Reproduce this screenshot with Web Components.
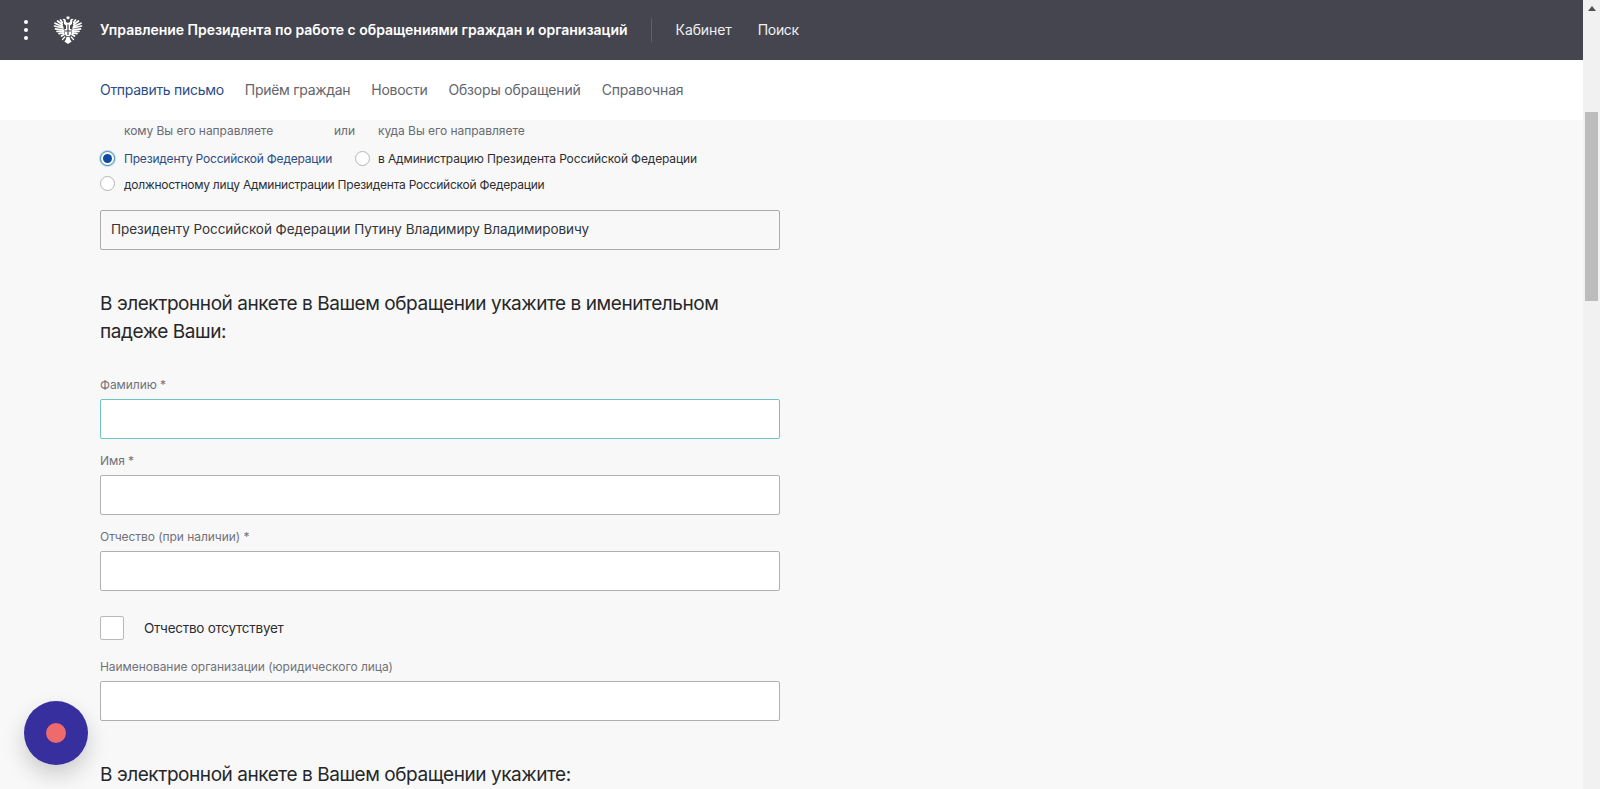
<!DOCTYPE html>
<html lang="ru"><head><meta charset="utf-8"><title>Обращения</title>
<style>
html,body{margin:0;height:100%;overflow:hidden;background:#f8f8f8;font-family:Roboto,"Liberation Sans",sans-serif}
</style></head><body>
<app-shell>
  <top-bar title-text="Управление Президента по работе с обращениями граждан и организаций"></top-bar>
  <sub-nav></sub-nav>
  <letter-form></letter-form>
</app-shell>
<record-fab></record-fab>
<script>
function def(name,css,html){
  customElements.define(name,class extends HTMLElement{
    connectedCallback(){
      if(this.shadowRoot)return;
      const r=this.attachShadow({mode:'open'});
      r.innerHTML='<style>'+css+'</style>'+(typeof html==='function'?html(this):html);
    }
  });
}
const FONT='font-family:Inter,Roboto,sans-serif;';
def('app-shell',`:host{display:grid;grid-template-columns:1fr 17px;height:789px;overflow:hidden}
.main{display:flex;flex-direction:column;min-width:0;height:789px;overflow:hidden}`,
`<div class="main"><slot></slot></div><fake-scrollbar></fake-scrollbar>`);
def('fake-scrollbar',`:host{display:flex;flex-direction:column;align-items:center;background:#f1f1f1;height:789px}
.btn{height:17px;width:17px;display:flex;align-items:center;justify-content:center}
.thumb{width:13px;height:189px;margin-top:95px;background:#bcbcbc}`,
`<div class="btn"><svg width="8" height="5" viewBox="0 0 8 5"><path d="M4 0 8 5H0z" fill="#505050"/></svg></div><div class="thumb"></div>`);
def('eagle-logo',`:host{display:block;width:30px;height:30px}svg{display:block}`,
`<svg width="30" height="30" viewBox="0 0 30 30">
<g fill="#fff">
<path d="M13.700 1.500h2.600l.4 1.800-1.700 1.200-1.700-1.200z"/>
<path d="M9.300 4.600c.8-1.300 2.700-1.300 3.300.1l.4 2.300 2 1 2-1 .4-2.300c.6-1.400 2.500-1.400 3.300-.1l-1.300.4-.4 4-2 1.500v3.500h-4v-3.500l-2-1.500-.4-4z"/>
<path d="M11.500 14h7l-.3 5-1.600 2.300h-3.200l-1.600-2.300z"/>
<path d="M13.500 22h3l.8 2.800 1.300 1.700-3.600 2.500-3.600-2.500 1.300-1.700z"/>
</g>
<path d="M14.400 9.500h1.200v10.500h-1.200z" fill="#44454f"/>
<path d="M12 15.500h6v1h-6z" fill="#44454f"/>
<g stroke="#fff" stroke-width="1.700" stroke-linecap="round" fill="none">
<path d="M9.300 7.500 7.500 5M9.200 9.500 4.500 6M9.500 11.500 2 8.200M10 13 1.500 11M10.300 15 2.500 13.800M10.500 16.500 4 16.300M10.700 18 6 18.700M11 19.500 8.500 21"/>
<path d="M20.700 7.500 22.500 5M20.800 9.500 25.500 6M20.500 11.500 28 8.200M20 13 28.500 11M19.700 15 27.500 13.800M19.500 16.500 26 16.300M19.300 18 24 18.700M19 19.500 21.500 21"/>
<path d="M11.800 22 9.500 24.500M18.200 22l2.300 2.500" stroke-width="1.300"/>
</g>
</svg>`);
def('top-bar',`:host{display:flex;align-items:center;flex:none;height:60px;background:#44454f;color:#fff;${FONT}font-size:14px}
.dots{width:6px;margin-left:23px;display:flex;flex-direction:column;gap:4px}
.dots i{width:4px;height:4px;margin:0 1px;border-radius:50%;background:#fff}
eagle-logo{margin-left:24px}
.t{margin-left:17px;padding-bottom:1px;font-weight:600;letter-spacing:-.02px;white-space:nowrap}
.sep{width:1px;height:24px;background:#5e5f69;margin:0 24px 0 23px}
a{color:#f0f0f0;margin-right:26px;padding-bottom:1px;letter-spacing:-.1px}
a:last-child{letter-spacing:-.3px}`,
h=>`<div class="dots"><i></i><i></i><i></i></div><eagle-logo></eagle-logo><span class="t">${h.getAttribute('title-text')}</span><span class="sep"></span><a>Кабинет</a><a>Поиск</a>`);
def('sub-nav',`:host{display:flex;align-items:center;flex:none;box-sizing:border-box;height:60px;padding:0 0 2px 100px;background:#fff;gap:21px;${FONT}font-size:14px;letter-spacing:-.29px;color:#63646c}
.on{color:#2b4c86}.w{letter-spacing:-.17px}`,
`<span class="on">Отправить письмо</span><span>Приём граждан</span><span>Новости</span><span class="w">Обзоры обращений</span><span class="w">Справочная</span>`);
def('radio-option',`:host{display:inline-flex;align-items:center;${FONT}font-size:12px;letter-spacing:var(--ls,-.2px);color:#2d2e33;white-space:nowrap;gap:var(--g,9px)}
.r{width:13px;height:13px;border:1px solid #b5b5b5;border-radius:50%;background:#fff;flex:none}
.l{padding-top:var(--t,0)}
:host([on]){color:#2b4c86}
:host([on]) .r{border-color:#3d8fb5;box-shadow:0 0 0 1px #b9dbe8}
:host([on]) .r::after{content:"";display:block;width:9px;height:9px;margin:2px;border-radius:50%;background:#0f4aa5}`,
`<span class="r"></span><span class="l"><slot></slot></span>`);
def('text-field',`:host{display:block;width:680px;${FONT}}
label{display:block;font-size:12px;line-height:16px;color:#71727a;letter-spacing:-.05px;margin-bottom:6px}
.i{box-sizing:border-box;height:40px;border:1px solid #b0b0b0;border-radius:2px;background:#fff}
:host([focused]) .i{border-color:#6cc5c4}`,
h=>`<label>${h.getAttribute('label')}</label><div class="i"></div>`);
def('check-field',`:host{display:flex;align-items:center;gap:20px;${FONT}font-size:13.500px;letter-spacing:-.26px;color:#2d2e33}
.b{box-sizing:border-box;width:24px;height:24px;border:1px solid #b9b9b9;border-radius:2px;background:#fff}`,
`<span class="b"></span><slot></slot>`);
def('letter-form',`:host{display:block;flex:none;padding:3px 0 0 100px;${FONT}color:#222}
.hint{display:flex;font-size:12px;line-height:16px;letter-spacing:-.05px;color:#6a6b72;padding-left:24px}
.hint .a{width:210px}.hint .b{width:44px}
.row{display:flex;align-items:center;height:25px}
.row.first{margin-top:7px}
.row.second{--t:2px;--ls:-.235px}
.row radio-option+radio-option{margin-left:23px;--ls:-.135px;--g:8px}
.ro{box-sizing:border-box;width:680px;height:40px;margin-top:14px;padding:0 0 2px 10px;border:1px solid #ababab;border-radius:2px;background:#f8f8f8;display:flex;align-items:center;font-size:13.500px;letter-spacing:-.05px;color:#33343a}
h2{font-weight:400;font-size:19px;line-height:28px;letter-spacing:-.44px;width:680px;margin:0;color:#26272b}
h2.one{margin-top:40px}
text-field.f1{margin-top:31px}
text-field.f2,text-field.f3{margin-top:14px}
check-field{margin-top:25px}
text-field.f4{margin-top:19px}
h2.two{margin-top:40px}`,
`<div class="hint"><span class="a">кому Вы его направляете</span><span class="b">или</span><span>куда Вы его направляете</span></div>
<div class="row first"><radio-option on>Президенту Российской Федерации</radio-option><radio-option>в Администрацию Президента Российской Федерации</radio-option></div>
<div class="row second"><radio-option>должностному лицу Администрации Президента Российской Федерации</radio-option></div>
<div class="ro">Президенту Российской Федерации Путину Владимиру Владимировичу</div>
<h2 class="one">В электронной анкете в Вашем обращении укажите в именительном падеже Ваши:</h2>
<text-field class="f1" focused label="Фамилию *"></text-field>
<text-field class="f2" label="Имя *"></text-field>
<text-field class="f3" label="Отчество (при наличии) *"></text-field>
<check-field>Отчество отсутствует</check-field>
<text-field class="f4" label="Наименование организации (юридического лица)"></text-field>
<h2 class="two">В электронной анкете в Вашем обращении укажите:</h2>`);
def('record-fab',`:host{position:fixed;left:24px;top:701px;width:64px;height:64px;border-radius:50%;background:#372f9e;box-shadow:0 10px 22px rgba(0,0,0,.18);display:flex;align-items:center;justify-content:center}
i{width:20px;height:20px;border-radius:50%;background:#ef6a6c}`,`<i></i>`);
</script>
</body></html>
